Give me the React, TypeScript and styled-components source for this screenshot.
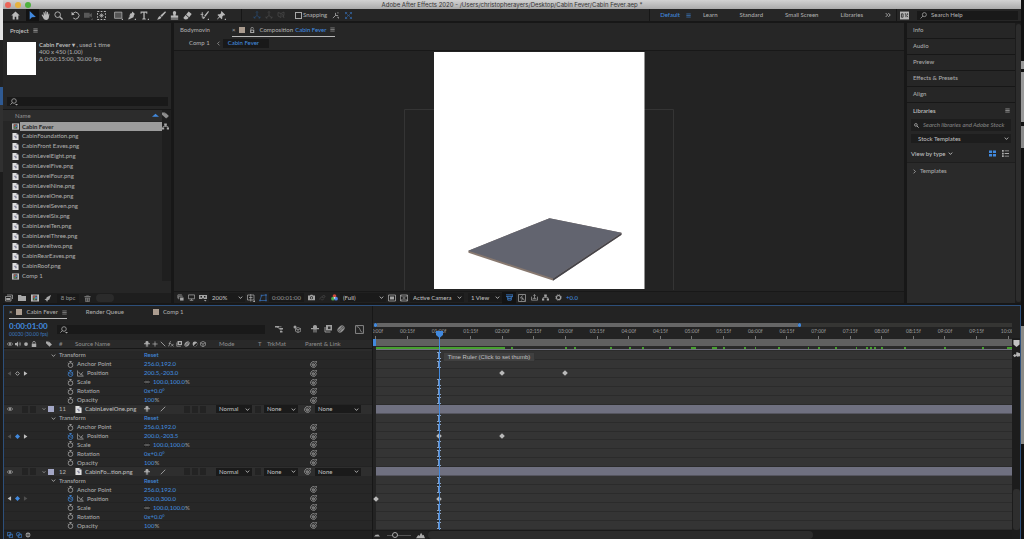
import React from "react";
import styled, { createGlobalStyle, css } from "styled-components";

const blue = "#4189de";
const grey = "#aaaaaa";
const panel = "#262626";
const field = "#191919";
const edge = "#171717";

const Global = createGlobalStyle`
  * { box-sizing: border-box; }
  body { margin: 0; background: #171717; }
  body, button, input, select, table {
    font: 500 6px/8px Lato, "Noto Sans CJK SC", sans-serif;
    color: ${grey};
  }
  button, input, select { border: 0; padding: 0; margin: 0; background: none; outline: none; }
  svg { display: block; flex: none; }
  h1, h2 { margin: 0; font: inherit; }
`;

/* ---------- icons, drawn on a 16 unit grid ---------- */
const F = "currentColor";
const glyphs: Record<string, React.ReactNode> = {
  home: <path fill={F} d="M8 1 0.5 8.2H3V15h3.6v-4.6h2.8V15H13V8.2h2.5z" />,
  arrow: <path fill={F} d="M3 0v15l4-4 7-.4z" />,
  hand: <path fill={F} d="M5 9 3 6.5C2 5.500.600 6.400 1.300 7.600L4.500 13.500C5.500 15.300 7 16 9 16c3 0 4.500-2 5-4.500l1-6c.2-1.300-1.400-1.500-1.700-.3L12.500 8 12.400 2.300c0-1.400-1.800-1.400-1.900 0L10.200 7 9.400 1c-.2-1.300-2-1.200-1.900.200L7.800 7.200 6.100 2.500C5.600 1.200 4 1.800 4.300 3z" />,
  zoom: <g fill="none" stroke={F} strokeWidth="1.600"><circle cx="6.500" cy="6.500" r="5" /><path strokeWidth="2.200" d="m10.200 10.200 5 5" /></g>,
  rotate: <g><path fill="none" stroke={F} strokeWidth="1.700" d="M3.500 4.500A6 6 0 1 1 4 12.500" /><path fill={F} d="M1 1.500v6l5.500-1z" /></g>,
  camera: <path fill={F} d="M0 3h10v3l4-2.500v8L10 9v3H0zM12 16l3.500-3.500V16z" />,
  panBehind: <g fill="none" stroke={F} strokeWidth="1.800"><path strokeDasharray="3 2.600" d="M1 1h14v14H1z" /><path d="M8 4v8M4 8h8M5 5l6 6M11 5l-6 6" strokeWidth="1.200" /></g>,
  rect: <g><path fill="#555" stroke={F} strokeWidth="1.300" d="M1 2h13v11H1z" /><path fill={F} d="M13 16l3-3v3z" /></g>,
  pen: <path fill={F} d="M9.500 1 14 5.500 12.500 7l-1 4L3 15l-1-1 4-5.500-.700-.700-3 5L6 4.500 8.500 4zM13 16l3-3v3z" />,
  type: <path fill={F} d="M1 1h12v4h-1.500L11 3H8.300v10l2 .7V15H4v-1.300l2-.7V3H3L2.500 5H1zM13 16l3-3v3z" />,
  brush: <path fill={F} d="M14.500 0.500 16 2 8.500 10.500 6 8zM5.200 8.800l2.500 2.500c-.700 3-3.700 4.200-7.700 3.700 2.300-1 1.800-5.200 5.200-6.200z" />,
  stamp: <path fill={F} d="M8 0a3 3 0 0 1 3 3c0 1.600-1.200 2.800-1 5h4.500v4h-13V8H6c.2-2.200-1-3.400-1-5a3 3 0 0 1 3-3zM1.500 13.500h13V15h-13z" />,
  eraser: <path fill={F} d="M10 1 15.500 5.500 11 11 5.500 6.200zM4.600 7.200 10 12l-2.500 2.800-4 .2L0.500 12.300z" />,
  roto: <g><path fill="none" stroke={F} strokeWidth="1.600" d="M1 6h5M4 2v9c0 2 2 2 3 .5" /><path fill={F} d="M14.500 0 16 1.500 9.500 10 7.500 8.500zM7 9.500 9 11c-.500 2-2.500 3-4.500 3 1.400-1 .900-3.500 2.500-4.500zM13 16l3-3v3z" /></g>,
  pin: <path fill={F} d="M8 0 14.500 6.500 13 8l-1.300-.3-2.500 2.600.300 2.700-1.500 1.500-3-3.200L0.500 15 0 14.500l3.800-4.600L.8 7l1.500-1.400 2.700.300 2.500-2.400L7 2zM13 16l3-3v3z" />,
  axis: <path fill="none" stroke={F} strokeWidth="1.500" d="M8 1v8M8 9l-6 5M8 9l6 5M6 3l2-2 2 2M2 11v3h3M14 11v3h-3" />,
  axisView: <path fill="none" stroke={F} strokeWidth="1.500" d="M2 3l6 2v8M2 3v7l6 3M8 5l6-3M14 2v7l-3 2M11 6l3 8" />,
  snapA: <path fill="none" stroke={F} strokeWidth="1.700" d="M8 2v6l-6 6M8 8h6M12 2h3M12 12h3v3" />,
  snapB: <path fill="none" stroke={F} strokeWidth="1.700" d="M1 5V1h4M11 1h4v4M15 11v4h-4M5 15H1v-4M1 1l5 5M15 1l-5 5M15 15l-5-5M1 15l5-5M6 8h4" />,
  menu: <path fill="none" stroke={F} strokeWidth="1.900" d="M1 3h14M1 8h14M1 13h14" />,
  more: <path fill="none" stroke={F} strokeWidth="2.200" d="m2 3 5 5-5 5M9 3l5 5-5 5" />,
  sync: <g><path fill="#b5b5b5" d="M0 1h16v14H0z" /><path fill="none" stroke="#333" strokeWidth="1.600" d="M2.500 5v6h3V5zM8.500 5h2v6M13.500 4v3M12 8l2 3" /></g>,
  search: <g fill="none" stroke={F} strokeWidth="1.700"><circle cx="10" cy="6" r="4.600" /><path d="m6.700 9.300-5.500 5.500" /></g>,
  searchDown: <g><circle cx="8" cy="6" r="4.600" fill="none" stroke={F} strokeWidth="1.600" /><path fill="none" stroke={F} strokeWidth="1.600" d="m4.700 9.300-4 4" /><path fill={F} d="M10 12h6l-3 3z" /></g>,
  find: <g fill="none" stroke={F} strokeWidth="2.200"><circle cx="6" cy="6" r="4.300" /><path strokeWidth="2.800" d="m9.300 9.300 5.500 5.500" /></g>,
  down: <path fill="none" stroke={F} strokeWidth="2.800" d="m2.500 5 5.500 6 5.500-6" />,
  right: <path fill="none" stroke={F} strokeWidth="2.600" d="m5 2 6 6-6 6" />,
  left: <path fill="none" stroke={F} strokeWidth="2.200" d="m11 2-6 6 6 6" />,
  triUp: <path fill={F} d="M0 11 8 4l8 7z" />,
  triLeft: <path fill={F} d="M13 1v14L2 8z" />,
  triRight: <path fill={F} d="M3 1v14l11-7z" />,
  diamond: <path fill={F} d="m8 0 8 8-8 8-8-8z" />,
  diamondLine: <path fill="none" stroke={F} strokeWidth="3" d="m8 2 6 6-6 6-6-6z" />,
  tag: <g fill={F}><path d="M0 1h7l8 8-5.500 6L0 6z" /><path stroke="#222" d="M6 3l3-1 7 7-4 4" /></g>,
  hierarchy: <g fill={F}><path d="M5 1h6v5H5zM0 10h5v5H0zM11 10h5v5h-5z" /><path fill="none" stroke={F} strokeWidth="1.500" d="M8 5v3M2.500 11V8h11v3" /></g>,
  file: <g><path fill="#dedede" d="M1 0h9l5 4v12H1z" /><path fill="#85858f" d="M10 0v4h5z" /><path fill="#8c8ca4" d="M5 6h5v3H5zM7 9h4v3H7z" /></g>,
  comp: <g><path fill="#bdbdbd" d="M0 1h16v14H0z" /><path fill="#444" d="M3.500 3h9v10h-9z" /><circle cx="6.500" cy="6" r="2.400" fill="#b05545" /><circle cx="9.800" cy="7.500" r="2.400" fill="#4b80b8" /><circle cx="7" cy="10" r="2" fill="#5c9a58" /></g>,
  footage: <g><path fill="none" stroke={F} strokeWidth="1.500" d="M4 2h11v8M1 5h11v9H1z" /><path fill={F} d="M2.500 8h8v4h-8z" /></g>,
  folder: <path fill={F} d="M0 2h6l1.500 2H16v10H0z" />,
  rocket: <path fill={F} d="M16 0 12 11l-3 .5L7 16l-2-4-4-2 4.500-2L6 5z" />,
  trash: <path fill={F} d="M5 1h6v1.500h4V5H1V2.500h4zM2 6h12l-1 10H3zM5.500 8v6h1V8zM9.500 8v6h1V8z" fillRule="evenodd" />,
  lock: <g><path fill={F} d="M2 7h12v9H2z" /><path fill="none" stroke={F} strokeWidth="2" d="M4.500 7V4.500a3.500 3.500 0 0 1 7 0V7" /></g>,
  unlock: <g><path fill={F} d="M3 7h11v9H3z" /><path fill="#222" d="M6 9.500h5v4H6z" /><path fill="none" stroke={F} strokeWidth="2" d="M5 7V4.500a3.500 3.500 0 0 1 7 0" /></g>,
  layers: <g><path fill="none" stroke={F} strokeWidth="1.600" d="M2 10V2h9M4 12V5h9" /><path fill={F} d="M7 8h8v7H7z" /></g>,
  monitor: <path fill="none" stroke={F} strokeWidth="1.700" d="M1 2h14v9H1zM4 14.500h8M8 11v3" />,
  mask3d: <g><path fill={F} fillRule="evenodd" d="M0 2h16v8h-6L8 8l-2 2H0zM3 4v3h3V4zM10 4v3h3V4z" /><path fill={F} d="M10 12h5l-2.500 3z" /></g>,
  grid: <g><path fill="none" stroke={F} strokeWidth="1.500" d="M1 2h13v10H1zM7.500 0v15M4 7h7" /><path fill={F} d="M11 16l5-4v4z" /></g>,
  region: <g><path fill="none" stroke={F} strokeWidth="1.600" d="M5 3 14 2v11H2z" /><path fill={F} d="M3.500 1.500h3v3h-3zM12.500 0.500h3v3h-3zM12.500 11.500h3v3h-3zM0.500 11.500h3v3h-3z" /></g>,
  snapshot: <path fill={F} fillRule="evenodd" d="M0 3.500h4.500L6 1.500h4l1.500 2H16V14H0zM8 5a3.600 3.600 0 1 0 .01 0zM8 6.800a1.800 1.800 0 1 1-.01 0z" />,
  showSnap: <path fill="none" stroke={F} strokeWidth="1.600" d="M2 13c0-4 2-6 5-6M7 7c0-3 4-5 7-2-1 4-4 5-7 2zM5 13c3 1 5 0 6-2" />,
  rgb: <g><circle cx="8" cy="4.700" r="4.200" fill="#d0493c" /><circle cx="4.500" cy="10.700" r="4.200" fill="#4aa64a" /><circle cx="11.500" cy="10.700" r="4.200" fill="#4e7fe0" /><circle cx="8" cy="8.700" r="2" fill="#e8e8e8" /></g>,
  roi: <g><path fill="none" stroke={F} strokeWidth="1.600" d="M1 2h14v12H1z" /><path fill={F} d="M4 5h8v6H4z" /></g>,
  alpha: <path fill="none" stroke={F} strokeWidth="1.600" d="M1 2h14v12H1zM1 2l5 5M10 9l5 5M15 2l-5 5M6 9l-5 5M8 4v8" />,
  ratio: <path fill="none" stroke={F} strokeWidth="1.800" d="M0 2h16v4H0M4 6v8h8V6M4 10h8" />,
  fast: <path fill="none" stroke={F} strokeWidth="1.500" d="M1 1h14v14H1zM9 3 5 8h5l-3 5M10 9l3 4" />,
  flow: <path fill="none" stroke={F} strokeWidth="1.700" d="M1 6v8h14V6M4 10h8M8 10V2M5.500 4 8 1l2.500 3" />,
  gear: <g fill="none" stroke={F}><circle cx="8" cy="8" r="4.700" strokeWidth="2.400" /><circle cx="8" cy="8" r="6.500" strokeWidth="2" strokeDasharray="2.500 2.600" /></g>,
  eye: <g><path fill="none" stroke={F} strokeWidth="1.800" d="M0.500 8C3 3 13 3 15.500 8 13 13 3 13 .500 8z" /><circle cx="8" cy="8" r="2.700" fill={F} /></g>,
  speaker: <g><path fill={F} d="M0 5h4l4-4v14l-4-4H0z" /><path fill="none" stroke={F} strokeWidth="1.800" d="M10 5c2 1 2 5 0 6M11.500 2c4 2 4 10 0 12" /></g>,
  dot: <circle cx="8" cy="8" r="5" fill={F} />,
  shy: <path fill={F} d="M8 0a4 4 0 0 1 4 4.500V6h4v2.500h-5V15H9V9H7v6H5V8.500H0V6h4V4.500A4 4 0 0 1 8 0z" />,
  burst: <path fill="none" stroke={F} strokeWidth="1.900" d="M8 1v4M8 11v4M1 8h4M11 8h4M8 5l3 3-3 3-3-3z" />,
  slash: <path fill="none" stroke={F} strokeWidth="2.200" d="M14 2 2 14" />,
  backslash: <path fill="none" stroke={F} strokeWidth="2.200" d="m2 2 12 12" />,
  fx: <path fill="none" stroke={F} strokeWidth="1.900" d="M8 2C5.500.500 5 3 4.500 6S3.500 14 .500 13.500M2 6.500h5.500M8.500 7.500l6 7M15 7.500l-7 7" />,
  frames: <g><path fill={F} d="M4 0h12v11H4z" /><path fill="none" stroke={F} strokeWidth="1.800" d="M2 4v10h11" /><path fill="#333" d="M8 3h5v5H8z" /></g>,
  motion: <g fill="none" stroke={F} strokeWidth="1.800"><circle cx="10" cy="6" r="4.500" /><circle cx="8" cy="8" r="4.500" /><circle cx="6" cy="10" r="4.500" /></g>,
  half: <g><circle cx="8" cy="8" r="6.500" fill={F} /><path fill="#222" d="M12 4.500A5.300 5.300 0 0 1 4.500 12z" /></g>,
  cube: <path fill="none" stroke={F} strokeWidth="1.700" d="M8 1l6.500 3.500v7L8 15l-6.500-3.500v-7zM1.500 4.500 8 8l6.500-3.500M8 8v7" />,
  miniflow: <g fill={F}><path d="M0 2h8v3H0zM9 6h7v3H9zM10 12h5v3h-5z" /><path fill="none" stroke={F} strokeWidth="1.400" d="M4 4l6 4M7 3.500h6M12 8v6" /></g>,
  draft3d: <g><path fill="none" stroke={F} strokeWidth="1.500" d="M10 5l5.500 2.500v5L10 15l-5-2.500v-5zM5 7.500l5 2 5.500-2M10 10v5" /><circle cx="4" cy="4" r="3" fill={F} /></g>,
  graph: <path fill="none" stroke={F} strokeWidth="1.400" d="M1 1h14v14H1zM3 3c7 0 5 9 10 10" />,
  watch: <g fill="none" stroke={F} strokeWidth="1.700"><circle cx="8" cy="9.500" r="5.300" /><path d="M5 1h6M8 1v3M2 4l2 2M14 4l-2 2" /></g>,
  watchOn: <g fill="none" stroke={F} strokeWidth="1.700"><circle cx="8" cy="9.500" r="5.300" /><path d="M5 1h6M8 1v3M2 4l2 2M14 4l-2 2M8 9.500l-3-3M8 9.500h3" /></g>,
  curve: <path fill="none" stroke={F} strokeWidth="1.600" d="M1 1v13h14M3 4l5 6 6-5M8 10l6 2" />,
  link: <g><path fill="#161616" d="M0 3h16v10H0z" /><path fill="none" stroke={F} strokeWidth="1.700" d="M7 6H3.500a2 2 0 0 0 0 4H7M9 6h3.500a2 2 0 0 1 0 4H9M5 8h6" /></g>,
  whip: <path fill="none" stroke={F} strokeWidth="1.600" d="M12 3A6.500 6.500 0 1 0 14 10c.500-2 .500-4-1.500-4.500L10 8M8 5.500C4 5.500 4 11.500 8 11.500s3-4.500.500-4.500-2 3 0 3M12 1h3v3" />,
  tiles: <path fill={F} d="M0 1h7v6H0zM9 1h7v6H9zM0 9h7v6H0zM9 9h7v6H9z" />,
  list: <path fill={F} d="M0 0h4v4H0zM0 6h4v4H0zM0 12h4v4H0zM6 1h10v2H6zM6 7h10v2H6zM6 13h10v2H6z" />,
  braces: <g><circle cx="8" cy="8" r="6.500" fill={F} /><path stroke="#222" strokeWidth="1.500" d="M6 4v8M10 4v8M2 8h12" /></g>,
  overlap: <g fill="none" stroke={F} strokeWidth="1.700"><path d="M1 1h9v9H1zM6 6h9v9H6z" /></g>,
  overlapDot: <g><circle cx="6" cy="6" r="5" fill="none" stroke={F} strokeWidth="1.700" /><path fill="none" stroke={F} strokeWidth="1.700" d="M6 6h9v9H6z" /></g>,
  hillSmall: <path fill={F} d="M2 11h12L10 6.500 8 8 6 7z" />,
  hillBig: <path fill={F} d="M0 13 4 7l2 2 3-6 3 5 1.500-1.500L16 13z" />,
  marker: <path fill="#c2c2c2" d="M1 0h14v10l-7 6-7-6z" />,
  bin: <path fill="#b5b5b5" d="M8 2l8 3v7l-7 1-1-2-4 3-4-4 4-3 3 2z" />,
};

const Icon = ({ name, size = 8, color }: { name: string; size?: number; color?: string }) => (
  <svg viewBox="0 0 16 16" width={size} height={size} color={color} aria-hidden="true">{glyphs[name]}</svg>
);

/* ---------- shared parts ---------- */
const Shell = styled.div`
  display: grid; grid-template-columns: 3px minmax(0, 1fr) 3px; min-height: 100vh;
`;
const LeftEdge = styled.div`
  background: linear-gradient(#ddd 0 8px, #e4e4e4 8px 40px, #222 40px 87px, #2f5a93 87px 105px, #303030 105px 172px, #1c1c1c 172px);
`;
const RightEdge = styled.div`
  background: linear-gradient(#111 0 61px, #999 61px 69px, #111 69px 72px, #999 72px 122px, #111 122px 126px, #8a8a8a 126px 148px, #111 148px 326px, #8a8a86 326px 444px, #111 444px);
`;
const Window = styled.div`display: flex; flex-direction: column; background: ${edge}; min-width: 0;`;

const TitleBar = styled.header`
  display: grid; grid-template-columns: 90px 1fr 90px; align-items: center; height: 9px;
  background: linear-gradient(#d2d2d2, #aaaaaa);
  h1 { font: 400 6px/9px Inter, sans-serif; color: #333; text-align: center; white-space: nowrap; }
`;
const Lights = styled.div`display: flex; gap: 4px; padding-left: 2px;`;
const Light = styled.button<{ $c: string }>`width: 6px; height: 6px; border-radius: 3px; background: ${p => p.$c};`;

const ToolBar = styled.div`
  display: flex; align-items: center; height: 13px; padding: 0 3px 0 6px; background: ${panel};
  border-bottom: 1px solid ${edge};
`;
const ToolGroup = styled.div<{ $gap?: number; $dim?: boolean }>`
  display: flex; margin-right: ${p => p.$gap ?? 4}px; color: ${p => (p.$dim ? "#4a4a4a" : "#b8b8b8")};
`;
const Tool = styled.button<{ $on?: boolean; $w?: number; $c?: string }>`
  display: grid; place-items: center; width: ${p => p.$w ?? 13}px; height: 12px;
  color: ${p => p.$c ?? "inherit"}; ${p => p.$on && css`background: #131313; color: ${blue};`}
`;
const Rule = styled.span`width: 1px; height: 12px; background: ${edge};`;
const Check = styled.label`
  display: flex; align-items: center; gap: 1px; margin: 0 2px 0 8px; height: 12px;
  input { appearance: none; width: 7px; height: 7px; border: 1px solid #a8a8a8; }
`;
const Workspaces = styled.nav`
  display: flex; align-items: center; gap: 22px; margin: 0 5px 0 10px; white-space: nowrap;
`;
const Space = styled.button<{ $on?: boolean }>`
  display: flex; gap: 6px; align-items: center; ${p => p.$on && css`color: ${blue}; margin-right: -10px;`}
`;
const Spacer = styled.span`flex: 1;`;

const SearchBox = styled.label<{ $w?: number; $h?: number }>`
  display: flex; align-items: center; gap: 4px; min-width: 0; padding: 0 3px;
  width: ${p => (p.$w ? `${p.$w}px` : "auto")}; height: ${p => p.$h ?? 9}px; background: ${field}; color: ${grey};
  input { flex: 1; min-width: 0; height: 8px; }
  input::placeholder { color: inherit; opacity: 1; }
`;

const Panels = styled.div`
  display: grid; grid-template-columns: 168px minmax(0, 1fr) 114px; gap: 3px; padding-top: 1px;
`;
const Panel = styled.section`display: flex; flex-direction: column; background: ${panel}; min-width: 0;`;

/* ---------- project panel ---------- */
const PanelHead = styled.header`
  display: flex; align-items: center; gap: 4px; height: 15px; padding-left: 7px; color: #c8c8c8;
`;
const AssetInfo = styled.div`
  display: flex; gap: 3px; height: 59px; padding: 4px 4px 0; white-space: nowrap;
  p { margin: 0; line-height: 7px; margin-top: -1px; }
  strong { font-weight: 700; color: #b8b8b8; }
`;
const Thumb = styled.div`width: 29px; height: 33px; background: #fff;`;
const ProjectSearch = styled.div`padding: 0 3px 3px 4px; border-bottom: 1px solid ${edge};`;
const AssetTable = styled.table`
  width: 100%; border-collapse: collapse; table-layout: fixed; margin-bottom: 12px;
  td, th { padding: 0; height: 10px; text-align: left; font-weight: 500; line-height: 8px; }
  tr > :last-child { width: 9px; background: #1f1f1f; }
  thead th { height: 11px; background: #2c2c2c; color: #8e8e8e; }
`;
const HeadCell = styled.div`display: flex; justify-content: space-between; align-items: center; padding: 0 3px 0 12px;`;
const AssetName = styled.div<{ $on?: boolean }>`
  display: flex; align-items: center; gap: 2px; padding-left: 9px; height: 9px;
  span { flex: 1; padding-left: 1px; }
  ${p => p.$on && css`span { background: #9c9c9c; color: #262626; font-weight: 700; line-height: 9px; margin-left: -1px; padding-left: 2px; }`}
`;
const ProjectFoot = styled.footer`
  display: flex; align-items: center; gap: 5px; height: 10px; padding-left: 2px; margin-top: auto; background: #1e1e1e; color: #a8a8a8;
`;
const Depth = styled.button`width: 22px; height: 9px; background: #191919; margin: 0 0 0 1px; line-height: 8px; color: #8f8f8f;`;
const Thumbbar = styled.span`width: 18px; height: 8px; border-radius: 4px; background: #2b2b2b;`;

/* ---------- composition panel ---------- */
const Tabs = styled.div`display: flex; align-items: center; height: 14px; padding-left: 6px;`;
const Tab = styled.button<{ $on?: boolean; $gap?: number }>`
  display: flex; align-items: center; gap: 4px; height: 14px; white-space: nowrap;
  margin-right: ${p => p.$gap ?? 0}px;
  border-bottom: 1px solid ${p => (p.$on ? "#b8b8b8" : "transparent")};
  em { font-style: normal; color: ${blue}; margin-left: -2px; }
`;
const Swatch = styled.span<{ $c?: string }>`width: 6px; height: 6px; background: ${p => p.$c ?? "#ab9c8f"};`;
const Crumbs = styled.div`
  display: flex; align-items: center; gap: 6px; height: 14px; padding: 0 0 1px 15px; border-bottom: 1px solid #181818;
`;
const CrumbOn = styled.button`width: 46px; height: 9px; padding-left: 5px; margin-left: -4px; text-align: left; background: ${field}; color: ${blue};`;
const Viewer = styled.div`flex: 1; display: flex; justify-content: center; padding-top: 1px; background: #232323; overflow: hidden;`;
const ViewBar = styled.footer`
  display: flex; align-items: center; height: 12px; padding-left: 1px; background: #202020; border-top: 1px solid #181818; color: #a4a4a4;
`;
const Drop = styled.span<{ $w: number; $bg?: string }>`
  position: relative; display: flex; align-items: center; justify-content: flex-end;
  width: ${p => p.$w}px; height: 9px; padding-right: 2px; background: ${p => p.$bg ?? "#1a1a1a"}; color: #bcbcbc;
  select { appearance: none; position: absolute; inset: 0; width: 100%; padding-left: 3px; line-height: 8px; color: inherit; }
`;
const Clock = styled.button`width: 35px; height: 9px; margin: 0 1px 0 0; background: #191919; line-height: 8px; color: #909090;`;
const Exposure = styled.button`color: ${blue}; margin-left: 1px;`;

/* ---------- side panel ---------- */
const Side = styled.aside`display: grid; grid-template-columns: 1fr 6px; background: #1c1c1c;`;
const SideMain = styled.div`display: flex; flex-direction: column; background: ${panel};`;
const SideBar = styled.span`margin: 1px 0 1px 1px; border-radius: 3px; background: #2c2c2c;`;
const SideTab = styled.button`
  height: 16px; padding: 0 6px 1px; text-align: left; border-bottom: 1px solid ${edge};
`;
const LibHead = styled.div`
  display: flex; justify-content: space-between; align-items: center; height: 15px; padding: 0 5px 0 6px; color: #c8c8c8;
`;
const LibBody = styled.div`
  display: flex; flex-direction: column; gap: 3px; padding: 1px 4px 1px;
  input { font-style: italic; color: #808080; }
  ${SearchBox}, ${Drop} { background: #1d1d1d; }
  select { padding-left: 7px; }
`;
const ViewBy = styled.div`
  display: flex; align-items: center; gap: 6px; height: 15px; padding-right: 2px;
  button { display: flex; align-items: center; gap: 3px; color: #c0c0c0; }
`;
const Templates = styled.div`
  flex: 1; padding: 4px 5px; background: #2a2a2a; border-top: 1px solid #1e1e1e;
  button { display: flex; align-items: center; gap: 3px; }
`;

/* ---------- timeline ---------- */
const Timeline = styled.section`
  flex: 1; display: grid; grid-template-columns: 368px minmax(0, 1fr) 8px; margin-top: 2px;
  border: 1px solid #2d4f7a; border-bottom: 0; background: #232323;
`;
const Column = styled.div`display: flex; flex-direction: column; min-width: 0;`;
const TimeTabs = styled(Tabs)`height: 13px; padding-left: 5px; ${Tab} { height: 13px; }`;
const TimeRow = styled.div`display: flex; align-items: center; height: 21px; padding: 0 8px 0 5px;`;
const TimeCode = styled.div`
  width: 48px;
  input { display: block; width: 46px; height: 9px; font-size: 8px; line-height: 9px; font-weight: 700; color: ${blue}; }
  small { display: block; font-size: 5px; line-height: 6px; color: #3a72b8; }
`;
const CompTools = styled.div`display: flex; margin-left: auto; gap: 5px; color: #a0a0a0;`;

const cols = "36px 16px 16px 72px 72px 39px 9px 38px minmax(0, 1fr)";
const ColHead = styled.div`
  display: grid; grid-template-columns: ${cols}; align-items: center; height: 9px;
  background: #292929; color: #8a8a8a; border-bottom: 1px solid ${edge};
  > span { padding-left: 3px; }
`;
const IconRun = styled.div<{ $gap?: number; $pad?: number }>`
  display: flex; align-items: center; gap: ${p => p.$gap ?? 2}px; padding-left: ${p => p.$pad ?? 0}px; color: #acacac;
`;
const Stub = styled.div`height: 2px; background: #2b2b2b;`;
const Rows = styled.div`flex: 1; display: grid; grid-auto-rows: minmax(8px, 1fr);`;
const LayerRow = styled.div`
  display: grid; grid-template-columns: ${cols}; align-items: center; background: #2e2e2e; color: #bababa;
  ${Drop} { height: 8px; }
`;
const PropRow = styled.div`
  display: grid; grid-template-columns: 36px 104px 166px minmax(0, 1fr); align-items: center; box-shadow: inset 0 -1px #232323;
  background: #272727;
`;
const PropName = styled.div<{ $indent: number }>`
  display: flex; align-items: center; gap: 3px; padding-left: ${p => p.$indent}px; line-height: 8px; white-space: nowrap;
`;
const Value = styled.div`
  display: flex; align-items: center; gap: 3px; color: #999; line-height: 8px;
  button { color: ${blue}; line-height: 8px; }
  span { margin-left: -3px; }
`;
const Box = styled.button`width: 6px; height: 7px; background: #232323;`;
const LayerName = styled.div`display: flex; align-items: center; gap: 3px; padding-left: 3px; white-space: nowrap;`;
const Foot = styled.footer`display: flex; align-items: center; height: 9px; background: #202020; border-top: 1px solid #1a1a1a;`;

const Graph = styled(Column)`position: relative; overflow: hidden; border-left: 1px solid ${edge};`;
const Navigator = styled.div`
  display: flex; height: 4px; margin-top: 17px; padding-left: 1px; background: #353533;
  i { width: 3px; background: ${blue}; border-radius: 2px; }
  span { width: 66%; background: #666; }
`;
const Ruler = styled.div`
  display: grid; grid-template-columns: repeat(21, 1fr); height: 12px; margin: 0 -12px 0 -13px;
  font-size: 5px; line-height: 9px; color: #969696; text-align: center;
`;
const Mark = styled.span`
  display: flex; flex-direction: column; align-items: center;
  &::after { content: ""; width: 1px; height: 3px; background: #777; }
`;
const WorkArea = styled.div`
  height: 7px; margin-left: 3px; background: #606060; box-shadow: -3px 0 ${blue};
`;
const Track = styled.div`position: relative; margin-left: 3px;`;
const CacheTrack = styled(Track)`height: 3px; background: #2a2a2a;`;
const Cached = styled.i`position: absolute; top: 1px; height: 2px; background: #47a02f;`;
const LayerEdge = styled.div`height: 2px; margin-left: 3px; background: linear-gradient(#72727f 50%, #2c2c2c 50%);`;
const GraphRows = styled(Rows)`position: relative; margin-left: 3px; background: #343434;`;
const GraphRow = styled.div<{ $layer?: boolean }>`
  position: relative; box-shadow: inset 0 -1px #2b2b2b;
  ${p => p.$layer && css`background: #6f7080; box-shadow: inset 0 -1px #55555f;`}
`;
const Key = styled.i`
  position: absolute; top: 50%; width: 4px; height: 4px; margin: -2px 0 0 -2px; background: #b9b9b9; transform: rotate(45deg);
`;
const Beam = styled.i`
  position: absolute; top: 1px; bottom: 1px; left: 9.92%; width: 4px; margin-left: -2px;
  border: solid #8fa6c4; border-width: 1px 0; 
  &::after { content: ""; position: absolute; inset: 0 1px; background: #7c9cc8; }
`;
const Overlay = styled.div`position: absolute; inset: 25px 0 9px 3px; pointer-events: none;`;
const Playhead = styled.div`
  position: absolute; left: 9.92%; top: 0; bottom: 0; width: 1px; background: ${blue};
  svg { margin-left: -3px; }
`;
const Tip = styled.div`
  position: absolute; top: 21px; left: 10.5%; padding: 0 4px; background: #404040; border: 1px solid #333;
  font: 400 6px/8px "Liberation Sans", sans-serif; color: #c0c0c0; white-space: nowrap;
`;
const Zoom = styled.input`
  appearance: none; width: 24px; height: 7px; margin: 0 5px 0 6px;
  background: linear-gradient(#555, #555) center / 100% 1px no-repeat;
  &::-webkit-slider-thumb { appearance: none; width: 6px; height: 6px; border: 1px solid #aaa; border-radius: 3px; background: #202020; }
`;
const HScroll = styled.div`flex: 1; height: 8px; background: #1b1b1b; margin-left: 3px;
  span { display: block; width: 66%; height: 8px; border-radius: 4px; background: #2c2c2c; }
`;
const Gutter = styled(Column)`
  padding-top: 34px; gap: 4px; align-items: center; background: linear-gradient(#232323 32px, #1c1c1c 32px);
  span { width: 7px; height: 41px; margin-top: auto; margin-bottom: 9px; border-radius: 3px; background: #2e2e2e; }
`;

/* ---------- data ---------- */
const toolGroups = [
  ["home"], ["arrow", "hand", "zoom"], ["rotate", "camera", "panBehind"], ["rect", "pen", "type"],
  ["brush", "stamp", "eraser"], ["roto"], ["pin"],
];
const assets = [
  "Cabin Fever", "CabinFoundation.png", "CabinFront Eaves.png", "CabinLevelEight.png", "CabinLevelFive.png",
  "CabinLevelFour.png", "CabinLevelNine.png", "CabinLevelOne.png", "CabinLevelSeven.png", "CabinLevelSix.png",
  "CabinLevelTen.png", "CabinLevelThree.png", "CabinLeveltwo.png", "CabinRearEaves.png", "CabinRoof.png", "Comp 1",
];
type Layer = { num?: string; name?: string; pos: string; keys: number[]; nav: [boolean, boolean, boolean] };
const layers: Layer[] = [
  { pos: "200.5,-203.0", keys: [2, 3], nav: [false, false, true] },
  { num: "11", name: "CabinLevelOne.png", pos: "200.0,-203.5", keys: [1, 2], nav: [false, true, true] },
  { num: "12", name: "CabinFo...tion.png", pos: "200.0,300.0", keys: [0, 1], nav: [true, true, false] },
];
const cached: [number, number][] = [
  [0, 2.04], [2.14, .03], [3, .03], [3.14, .03], [3.71, .03], [4.01, .03], [4.21, .03], [4.64, .03], [5, .07], [5.33, .07],
  [5.5, .03], [5.83, .03], [6, .03], [6.37, .03], [6.84, .03], [7, .03], [7.27, .03], [7.6, .03], [7.77, .03], [7.83, .03],
  [7.9, .03], [8, .03], [8.37, .03], [9, .03], [9.6, .03], [10, .08],
];
const at = (seconds: number) => `${(seconds / 10.08) * 100}%`;
const marks = Array.from({ length: 21 }, (_, i) => `${String(Math.floor(i / 2)).padStart(2, "0")}:${i % 2 ? "15" : "00"}f`);

const Select = ({ label, value, width, bg }: { label: string; value: string; width: number; bg?: string }) => (
  <Drop $w={width} $bg={bg}>
    <select aria-label={label} defaultValue={value}><option>{value}</option></select>
    <Icon name="down" size={5} />
  </Drop>
);

const Prop = ({ name, indent = 27, icon = "watch", nav, children }: {
  name: string; indent?: number; icon?: string; nav?: Layer["nav"]; children: React.ReactNode;
}) => (
  <PropRow>
    {nav ? (
      <IconRun $gap={3} $pad={3}>
        <Icon name="triLeft" size={5} color={nav[0] ? "#c0c0c0" : "#505050"} />
        <Icon name={nav[1] ? "diamond" : "diamondLine"} size={5} color={nav[1] ? blue : grey} />
        <Icon name="triRight" size={5} color={nav[2] ? "#c0c0c0" : "#505050"} />
      </IconRun>
    ) : <span />}
    <PropName $indent={indent}>
      <Icon name={icon} size={icon === "down" ? 5 : 7} color={icon === "watchOn" ? blue : undefined} />
      {icon === "watchOn" && <Icon name="curve" size={7} />}
      {name}
    </PropName>
    <Value>{children}</Value>
    {icon === "down" ? <span /> : <Icon name="whip" size={7} />}
  </PropRow>
);

const LayerRows = ({ layer }: { layer: Layer }) => (
  <>
    {layer.num && (
      <LayerRow>
        <IconRun $gap={2} $pad={3}><Icon name="eye" size={6} /><IconRun $pad={7}><Box aria-label="Solo" /><Box aria-label="Lock" /></IconRun></IconRun>
        <IconRun $gap={2} $pad={2}><Icon name="down" size={4} /><Swatch $c="#a3a7c6" /></IconRun>
        <IconRun $pad={3}>{layer.num}</IconRun>
        <LayerName><Icon name="file" size={7} />{layer.name}</LayerName>
        <IconRun $gap={10}><Icon name="shy" size={6} /><Icon name="slash" size={6} /><IconRun $pad={8} $gap={2}><Box aria-label="Blur" /><Box aria-label="Adjust" /><Box aria-label="3D" /></IconRun></IconRun>
        <Select label="Mode" value="Normal" width={36} />
        <Box aria-label="Preserve transparency" />
        <Select label="Track matte" value="None" width={34} />
        <IconRun $gap={4} $pad={2}><Icon name="whip" size={7} /><Select label="Parent" value="None" width={46} /></IconRun>
      </LayerRow>
    )}
    <Prop name="Transform" indent={11} icon="down"><button>Reset</button></Prop>
    <Prop name="Anchor Point"><button>256.0,192.0</button></Prop>
    <Prop name="Position" icon="watchOn" nav={layer.nav}><button>{layer.pos}</button></Prop>
    <Prop name="Scale"><Icon name="link" size={6} /><button>100.0,100.0</button><span>%</span></Prop>
    <Prop name="Rotation"><button>0x+0.0°</button></Prop>
    <Prop name="Opacity"><button>100</button><span>%</span></Prop>
  </>
);

const Stage = () => (
  <svg viewBox="404 52 271 238" width="271" height="238" role="img" aria-label="Cabin floor in the composition frame">
    <path d="M404.500 290V109.500h269V290" fill="none" stroke="#343434" />
    <path d="M434 52h210.500v237H434z" fill="#fff" />
    <path d="M468.300 250.700 549.500 218.200 621.500 232.800 621.300 235 553 280.500 468.500 252.800z" fill="#87786f" />
    <path d="M553 278.500 621.500 233v1.800L553 280.700z" fill="#45444a" />
    <path d="M468.300 250.700 549.500 218.200 621.500 232.800 553 278.500z" fill="#62646f" />
  </svg>
);

export default function App() {
  return (
    <Shell>
      <Global />
      <LeftEdge />
      <Window>
        <TitleBar>
          <Lights>
            <Light $c="#ec6559" aria-label="Close" /><Light $c="#e6b23e" aria-label="Minimise" /><Light $c="#4fb13f" aria-label="Zoom" />
          </Lights>
          <h1>Adobe After Effects 2020 - /Users/christopherayers/Desktop/Cabin Fever/Cabin Fever.aep *</h1>
        </TitleBar>

        <ToolBar>
          {toolGroups.map(group => (
            <ToolGroup key={group[0]}>
              {group.map(t => (
                <Tool key={t} aria-label={t} $on={t === "arrow"} $c={t === "camera" ? "#585858" : undefined}><Icon name={t} size={9} /></Tool>
              ))}
            </ToolGroup>
          ))}
          <ToolGroup $gap={9} />
          <Rule />
          <ToolGroup $gap={9} />
          <ToolGroup $gap={0} $dim>
            <Tool $w={12} $c="#294b73" aria-label="Local axis"><Icon name="axis" /></Tool>
            <Tool $w={12} aria-label="World axis"><Icon name="axis" /></Tool>
            <Tool $w={12} aria-label="View axis"><Icon name="axisView" /></Tool>
          </ToolGroup>
          <Check><input type="checkbox" />Snapping</Check>
          <ToolGroup>
            <Tool aria-label="Snap edges"><Icon name="snapA" size={7} /></Tool>
            <Tool $c="#3568a8" aria-label="Snap features"><Icon name="snapB" size={7} /></Tool>
          </ToolGroup>
          <Spacer />
          <Rule />
          <Workspaces>
            <Space $on>Default<Icon name="menu" size={5} /></Space>
            <Space>Learn</Space><Space>Standard</Space><Space>Small Screen</Space><Space>Libraries</Space>
            <Space aria-label="More"><Icon name="more" size={6} color="#c4c4c4" /></Space>
          </Workspaces>
          <Rule />
          <ToolGroup $gap={5}><Tool $w={15} aria-label="Sync"><Icon name="sync" size={9} /></Tool></ToolGroup>
          <SearchBox $w={101}><Icon name="search" size={7} /><input aria-label="Search Help" placeholder="Search Help" /></SearchBox>
        </ToolBar>

        <Panels>
          <Panel>
            <PanelHead><h2>Project</h2><Icon name="menu" size={5} /></PanelHead>
            <AssetInfo>
              <Thumb />
              <p><strong>Cabin Fever ▾</strong> , used 1 time<br />400 x 450 (1.00)<br />Δ 0:00:15:00, 30.00 fps</p>
            </AssetInfo>
            <ProjectSearch><SearchBox><Icon name="searchDown" /><input aria-label="Search project" /></SearchBox></ProjectSearch>
            <AssetTable>
              <thead>
                <tr><th><HeadCell>Name<Icon name="triUp" size={7} color={blue} /></HeadCell></th><th><Icon name="tag" size={7} /></th></tr>
              </thead>
              <tbody>
                {assets.map((a, i) => (
                  <tr key={a}>
                    <td><AssetName $on={i === 0}><Icon name={a.endsWith("png") ? "file" : "comp"} size={7} /><span>{a}</span></AssetName></td>
                    <td>{i === 0 && <Icon name="hierarchy" size={7} />}</td>
                  </tr>
                ))}
              </tbody>
            </AssetTable>
            <ProjectFoot>
              <Icon name="footage" /><Icon name="folder" /><Icon name="comp" /><Icon name="rocket" size={7} />
              <Depth>8 bpc</Depth><Icon name="trash" size={7} color="#707070" /><Thumbbar />
            </ProjectFoot>
          </Panel>

          <Panel>
            <Tabs>
              <Tab $gap={22}>Bodymovin</Tab>
              <Tab $on><span>×</span><Swatch /><Icon name="unlock" size={6} />Composition <em>Cabin Fever</em><Icon name="menu" size={5} /></Tab>
            </Tabs>
            <Crumbs><span>Comp 1</span><Icon name="left" size={5} /><CrumbOn>Cabin Fever</CrumbOn></Crumbs>
            <Viewer><Stage /></Viewer>
            <ViewBar>
              <Tool $w={11} aria-label="Preview"><Icon name="layers" size={7} /></Tool>
              <Tool $w={11} aria-label="Monitor"><Icon name="monitor" size={7} /></Tool>
              <Tool $w={12} aria-label="Mask"><Icon name="mask3d" /></Tool>
              <Select label="Magnification" value="200%" width={36} />
              <Tool $w={12} aria-label="Guides"><Icon name="grid" /></Tool>
              <Tool $w={12} $c="#3568a8" aria-label="Region"><Icon name="region" /></Tool>
              <Clock>0:00:01:00</Clock>
              <Tool $w={12} aria-label="Snapshot"><Icon name="snapshot" size={7} /></Tool>
              <Tool $w={11} $c="#484848" aria-label="Show snapshot"><Icon name="showSnap" size={7} /></Tool>
              <Tool $w={12} aria-label="Channels"><Icon name="rgb" size={7} /></Tool>
              <Select label="Resolution" value="(Full)" width={46} />
              <Tool $w={12} aria-label="Region of interest"><Icon name="roi" /></Tool>
              <Tool $w={12} aria-label="Transparency"><Icon name="alpha" /></Tool>
              <Select label="Camera" value="Active Camera" width={54} />
              <ToolGroup />
              <Select label="Views" value="1 View" width={34} />
              <Tool $w={14} $on aria-label="Pixel aspect"><Icon name="ratio" size={7} /></Tool>
              <Tool $w={12} aria-label="Fast previews"><Icon name="fast" /></Tool>
              <Tool $w={12} aria-label="Timeline"><Icon name="flow" size={7} /></Tool>
              <Tool $w={11} aria-label="Flowchart"><Icon name="hierarchy" size={7} /></Tool>
              <Tool $w={14} aria-label="Reset exposure"><Icon name="gear" size={7} /></Tool>
              <Exposure>+0.0</Exposure>
            </ViewBar>
          </Panel>

          <Side>
            <SideMain>
              {["Info", "Audio", "Preview", "Effects & Presets", "Align"].map(t => <SideTab key={t}>{t}</SideTab>)}
              <LibHead><h2>Libraries</h2><Icon name="menu" size={5} /></LibHead>
              <LibBody>
                <SearchBox $h={12}><Icon name="find" size={5} color="#c0c0c0" /><input aria-label="Search libraries" placeholder="Search libraries and Adobe Stock" /></SearchBox>
                <Drop as="span" $w={100}>
                  <select aria-label="Library" defaultValue="Stock Templates"><option>Stock Templates</option></select>
                  <Icon name="down" size={5} />
                </Drop>
                <ViewBy><button>View by type<Icon name="down" size={5} /></button><Spacer /><Icon name="tiles" size={7} color={blue} /><Icon name="list" size={7} /></ViewBy>
              </LibBody>
              <Templates><button><Icon name="right" size={5} />Templates</button></Templates>
            </SideMain>
            <SideBar />
          </Side>
        </Panels>

        <Timeline>
          <Column>
            <TimeTabs>
              <Tab $on $gap={19}><span>×</span><Swatch />Cabin Fever<Icon name="menu" size={5} /></Tab>
              <Tab $gap={29}>Render Queue</Tab>
              <Tab><Swatch />Comp 1</Tab>
            </TimeTabs>
            <TimeRow>
              <TimeCode><input aria-label="Current time" defaultValue="0:00:01:00" /><small>00030 (30.00 fps)</small></TimeCode>
              <SearchBox $w={208}><Icon name="searchDown" /><input aria-label="Search layers" /></SearchBox>
              <CompTools>
                <Icon name="miniflow" /><span /><Icon name="draft3d" /><span /><Icon name="shy" /><Icon name="frames" /><Icon name="motion" /><span /><Icon name="graph" size={9} />
              </CompTools>
            </TimeRow>
            <ColHead>
              <IconRun $gap={2} $pad={3}><Icon name="eye" size={6} /><Icon name="speaker" size={6} /><Icon name="dot" size={6} /><Icon name="lock" size={6} /></IconRun>
              <IconRun $pad={6}><Icon name="tag" size={6} /></IconRun>
              <span>#</span>
              <span>Source Name</span>
              <IconRun>
                {["shy", "burst", "backslash", "fx", "frames", "motion", "half", "cube"].map(n => <Icon key={n} name={n} size={6} />)}
              </IconRun>
              <span>Mode</span><span>T</span><span>TrkMat</span><span>Parent &amp; Link</span>
            </ColHead>
            <Stub />
            <Rows>{layers.map(l => <LayerRows key={l.pos} layer={l} />)}</Rows>
            <Foot><IconRun $gap={3} $pad={3}><Icon name="overlap" size={6} color={blue} /><Icon name="overlapDot" size={6} color={blue} /><Icon name="braces" size={6} /></IconRun></Foot>
          </Column>

          <Graph>
            <Navigator><i /><span /><i /></Navigator>
            <Ruler>{marks.map(m => <Mark key={m}>{m}</Mark>)}</Ruler>
            <WorkArea />
            <CacheTrack>{cached.map(([t, d]) => <Cached key={t} style={{ left: at(t), width: at(d) }} />)}</CacheTrack>
            <LayerEdge />
            <GraphRows>
              {layers.map(l => (
                <React.Fragment key={l.pos}>
                  {l.num && <GraphRow $layer />}
                  {[0, 1, 2, 3, 4, 5].map(r => (
                    <GraphRow key={r}>
                      {r !== 2 && <Beam />}
                      {r === 2 && l.keys.map(k => <Key key={k} style={{ left: at(k) }} />)}
                    </GraphRow>
                  ))}
                </React.Fragment>
              ))}
            </GraphRows>
            <Foot>
              <Icon name="hillSmall" />
              <Zoom type="range" aria-label="Timeline zoom" defaultValue={30} />
              <Icon name="hillBig" size={9} />
              <HScroll><span /></HScroll>
            </Foot>
            <Overlay>
              <Playhead>
                <svg width="7" height="7" viewBox="0 0 7 7"><path d="M0 0h7v4L3.500 7 0 4z" fill={blue} /></svg>
              </Playhead>
              <Tip role="tooltip">Time Ruler (Click to set thumb)</Tip>
            </Overlay>
          </Graph>

          <Gutter><Icon name="marker" size={7} /><Icon name="bin" size={7} /><span /></Gutter>
        </Timeline>
      </Window>
      <RightEdge />
    </Shell>
  );
}
